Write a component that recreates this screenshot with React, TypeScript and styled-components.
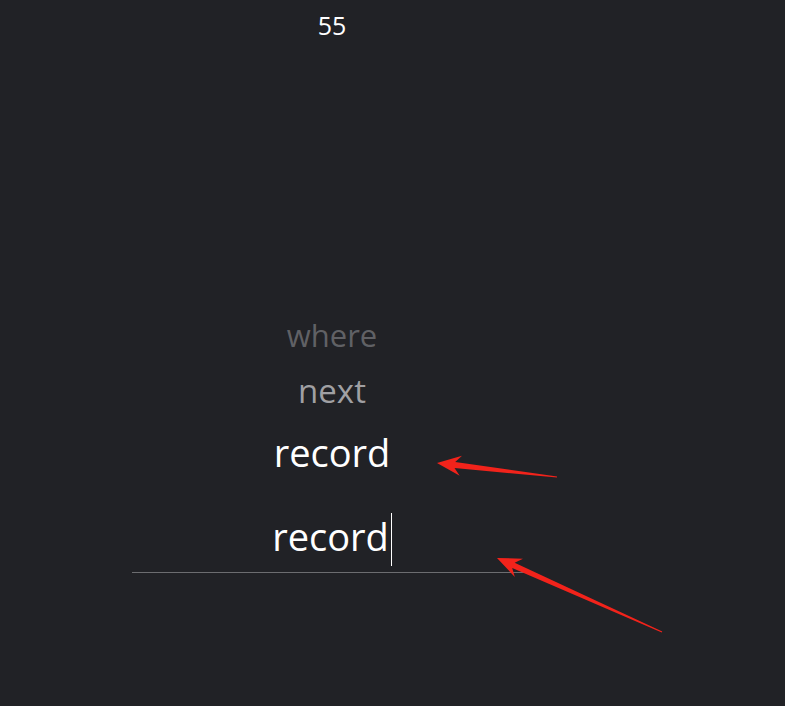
import React from "react";
import styled, { createGlobalStyle } from "styled-components";

const Global = createGlobalStyle`
  html, body {
    margin: 0;
    padding: 0;
    background: #212226;
    height: 100%;
  }
  body {
    font-family: "Open Sans", "Noto Sans", sans-serif;
    color: #ffffff;
  }
`;

const Page = styled.div`
  position: relative;
  width: 785px;
  height: 706px;
  background: #212226;
  overflow: hidden;
`;

const Column = styled.div`
  width: 400px;
  margin-left: 132px;
  display: flex;
  flex-direction: column;
  align-items: center;
`;

const Counter = styled.div`
  margin-top: 8px;
  font-size: 25px;
  line-height: 34px;
  color: #ffffff;
`;

const Wheel = styled.div`
  margin-top: 268px;
  display: flex;
  flex-direction: column;
  align-items: center;
`;

const WheelItem = styled.div<{ $level: number }>`
  font-size: ${(p) => [38, 33, 31][p.$level]}px;
  line-height: ${(p) => [60, 62, 50][p.$level]}px;
  color: ${(p) => ["#ffffff", "#a0a0a3", "#606165"][p.$level]};
`;

const Field = styled.div`
  align-self: stretch;
  margin-top: 23px;
  height: 67px;
  border-bottom: 1px solid #6c6d70;
  display: flex;
  justify-content: center;
  align-items: flex-start;
`;

const FieldText = styled.div`
  font-size: 38px;
  line-height: 56px;
  padding-top: 1px;
  color: #ffffff;
  display: flex;
  align-items: center;
`;

const Caret = styled.span`
  display: inline-block;
  width: 1px;
  height: 53px;
  margin-left: 2px;
  margin-top: 7px;
  background: #ffffff;
  align-self: flex-start;
`;

const Marks = styled.svg`
  position: absolute;
  left: 0;
  top: 0;
  pointer-events: none;
`;

function Arrow({ x1, y1, x2, y2 }: { x1: number; y1: number; x2: number; y2: number }) {
  // arrow from tail (x1,y1) to tip (x2,y2)
  const dx = x2 - x1;
  const dy = y2 - y1;
  const len = Math.hypot(dx, dy);
  const ux = dx / len;
  const uy = dy / len;
  const px = -uy;
  const py = ux;
  const head = 24;
  const half = 10;
  const bx = x2 - ux * head;
  const by = y2 - uy * head;
  const nx = x2 - ux * (head - 6);
  const ny = y2 - uy * (head - 6);
  const shaft = [
    `${x1 + px * 0.6},${y1 + py * 0.6}`,
    `${nx + px * 3},${ny + py * 3}`,
    `${bx + px * half},${by + py * half}`,
    `${x2},${y2}`,
    `${bx - px * half},${by - py * half}`,
    `${nx - px * 3},${ny - py * 3}`,
    `${x1 - px * 0.6},${y1 - py * 0.6}`,
  ].join(" ");
  return <polygon points={shaft} fill="#f2231b" />;
}

export default function App() {
  return (
    <Page>
      <Global />
      <Column>
        <Counter>55</Counter>
        <Wheel>
          <WheelItem $level={2}>where</WheelItem>
          <WheelItem $level={1}>next</WheelItem>
          <WheelItem $level={0}>record</WheelItem>
        </Wheel>
        <Field>
          <FieldText>
            record
            <Caret />
          </FieldText>
        </Field>
      </Column>
      <Marks width="785" height="706" viewBox="0 0 785 706">
        <Arrow x1={557} y1={477} x2={437} y2={463} />
        <Arrow x1={662} y1={632} x2={497} y2={558} />
      </Marks>
    </Page>
  );
}
